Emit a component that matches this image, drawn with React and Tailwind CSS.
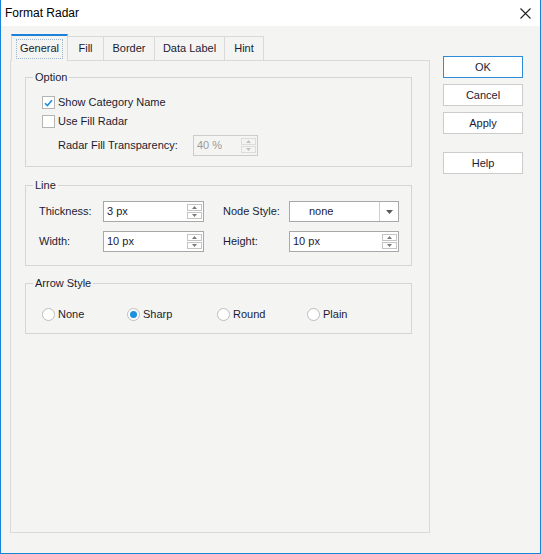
const font = { fontFamily: '"Liberation Sans", Arial, sans-serif' };

function Spin({ disabled }) {
  const edge = disabled ? 'border-[#dcdcdc]' : 'border-[#c4c4c4]';
  const tri = disabled ? '#c0c0c0' : '#7a7a7a';
  return (
    <div className="flex flex-col gap-[1px] mr-[1px]">
      <div className={`w-[15px] h-[7px] border ${edge} flex items-center justify-center`}>
        <svg width="5" height="3" viewBox="0 0 5 3"><path d="M0 3 L2.5 0 L5 3 Z" fill={tri} /></svg>
      </div>
      <div className={`w-[15px] h-[7px] border ${edge} flex items-center justify-center`}>
        <svg width="5" height="3" viewBox="0 0 5 3"><path d="M0 0 L2.5 3 L5 0 Z" fill={tri} /></svg>
      </div>
    </div>
  );
}

function SpinBox({ value, width, disabled }) {
  return (
    <div
      className={`h-[21px] flex items-center justify-between border pl-[3px] ${
        disabled ? 'border-[#cccccc] text-[#9a9a9a]' : 'border-[#a8a8a8] bg-white'
      }`}
      style={{ width }}
    >
      <span>{value}</span>
      <Spin disabled={disabled} />
    </div>
  );
}

function Group({ title, className, children }) {
  return (
    <div className={`relative border border-[#d5d5d5] ${className}`}>
      <span className="absolute left-[7px] -top-[7px] px-[2px] leading-[13px] bg-[#f4f5f2]">{title}</span>
      {children}
    </div>
  );
}

function Check({ checked, label }) {
  return (
    <div className="flex items-center h-[13px]">
      <div className="w-[13px] h-[13px] border border-[#b5b5b5] bg-white flex items-center justify-center">
        {checked && (
          <svg width="9" height="8" viewBox="0 0 9 8">
            <path d="M1 4.2 L3.4 6.6 L8 1.2" stroke="#1b8fe0" strokeWidth="1.6" fill="none" />
          </svg>
        )}
      </div>
      <span className="ml-[3px]">{label}</span>
    </div>
  );
}

function Radio({ checked, label, width }) {
  return (
    <div className="flex items-center h-[13px]" style={{ width }}>
      <div className="w-[13px] h-[13px] rounded-full border border-[#bdbdbd] bg-white flex items-center justify-center">
        {checked && <div className="w-[7px] h-[7px] rounded-full bg-[#1b8fe0]" />}
      </div>
      <span className="ml-[3px]">{label}</span>
    </div>
  );
}

function Button({ label, primary, className = '' }) {
  return (
    <div
      className={`w-[80px] h-[22px] flex items-center justify-center bg-white border ${
        primary ? 'border-[#2b8ddb]' : 'border-[#cccccc]'
      } ${className}`}
    >
      {label}
    </div>
  );
}

export default function App() {
  const tabs = [
    { label: 'Fill', w: 'w-[36px]' },
    { label: 'Border', w: 'w-[51px]' },
    { label: 'Data Label', w: 'w-[70px]' },
    { label: 'Hint', w: 'w-[39px]' },
  ];

  return (
    <div
      className="w-[541px] h-[554px] flex flex-col bg-[#f4f5f2] border-l border-r border-b border-[#1883d7] text-[11px] text-[#1b1b33]"
      style={font}
    >
      <div className="h-[26px] shrink-0 bg-white flex items-center justify-between pl-[4px] pr-[9px] text-[12px] text-black">
        <span>Format Radar</span>
        <svg width="11" height="11" viewBox="0 0 11 11">
          <path d="M0.5 0.5 L10.5 10.5 M10.5 0.5 L0.5 10.5" stroke="#222" strokeWidth="1.1" />
        </svg>
      </div>

      <div className="flex-1 flex pl-[9px] pt-[8px] pb-[20px]">
        <div className="w-[420px] flex flex-col">
          <div className="h-[26px] flex items-end">
            <div className="relative z-10 ml-[1px] -mb-px w-[57px] h-[27px] bg-[#f4f5f2] border-t-2 border-t-[#1a80d8] border-l border-r border-[#d9d9d9] flex items-center justify-center">
              <span className="border border-dotted border-[#9fb4cc] w-[47px] h-[20px] flex items-center justify-center">
                General
              </span>
            </div>
            {tabs.map((t) => (
              <div
                key={t.label}
                className={`${t.w} h-[24px] border-t border-r border-[#d9d9d9] flex items-center justify-center`}
              >
                {t.label}
              </div>
            ))}
          </div>

          <div className="flex-1 border border-[#d9d9d9] pl-[14px] pt-[16px]">
            <Group title="Option" className="w-[387px] h-[90px] pt-[18px] pl-[16px]">
              <Check checked label="Show Category Name" />
              <div className="mt-[6px]">
                <Check label="Use Fill Radar" />
              </div>
              <div className="mt-[7px] flex items-center pl-[16px]">
                <span className="w-[135px]">Radar Fill Transparency:</span>
                <SpinBox value="40 %" width={65} disabled />
              </div>
            </Group>

            <Group title="Line" className="mt-[18px] w-[387px] h-[81px] pt-[15px] pl-[13px]">
              <div className="flex items-center">
                <span className="w-[64px]">Thickness:</span>
                <SpinBox value="3 px" width={101} />
                <span className="ml-[19px] w-[66px]">Node Style:</span>
                <div className="w-[110px] h-[21px] border border-[#a8a8a8] bg-white flex items-center justify-between">
                  <span className="pl-[19px]">none</span>
                  <div className="w-[19px] h-[19px] border-l border-[#cfcfcf] flex items-center justify-center">
                    <svg width="7" height="4" viewBox="0 0 7 4"><path d="M0 0 L3.5 4 L7 0 Z" fill="#5a5a5a" /></svg>
                  </div>
                </div>
              </div>
              <div className="mt-[9px] flex items-center">
                <span className="w-[64px]">Width:</span>
                <SpinBox value="10 px" width={101} />
                <span className="ml-[19px] w-[66px]">Height:</span>
                <SpinBox value="10 px" width={110} />
              </div>
            </Group>

            <Group title="Arrow Style" className="mt-[17px] w-[387px] h-[51px] pt-[24px] pl-[16px]">
              <div className="flex">
                <Radio label="None" width={85} />
                <Radio label="Sharp" checked width={90} />
                <Radio label="Round" width={90} />
                <Radio label="Plain" width={90} />
              </div>
            </Group>
          </div>
        </div>

        <div className="ml-[13px] pt-[22px] flex flex-col">
          <Button label="OK" primary />
          <Button label="Cancel" className="mt-[6px]" />
          <Button label="Apply" className="mt-[6px]" />
          <Button label="Help" className="mt-[18px]" />
        </div>
      </div>
    </div>
  );
}
